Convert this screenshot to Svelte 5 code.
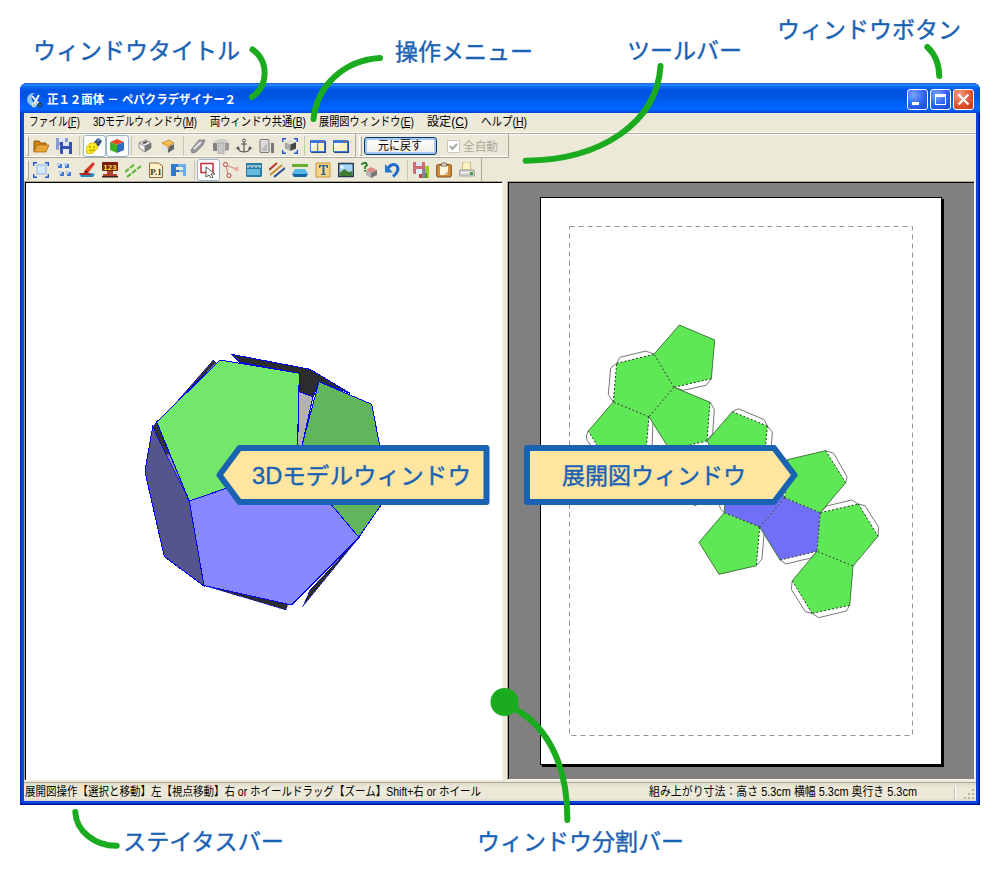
<script>
  const menus = [
    { t: 'ファイル(F)', w: 51 },
    { t: '3Dモデルウィンドウ(M)', w: 104 },
    { t: '両ウィンドウ共通(B)', w: 96 },
    { t: '展開図ウィンドウ(E)', w: 95 },
    { t: '設定(C)', w: 41 },
    { t: 'ヘルプ(H)', w: 46 }
  ];

  const cube = (top, left, right) =>
    `<path d="M8 1 15 4 8 7 1 4Z" fill="${top}"/><path d="M1 4 8 7V15L1 12Z" fill="${left}"/><path d="M15 4 8 7V15L15 12Z" fill="${right}"/>`;
  const floppy = (c, x = 0, y = 0) =>
    `<path d="M${x} ${y}h12v12h-11l-1-1z" fill="${c}"/><path d="M${x + 3} ${y}h6v4h-6z" fill="#dde4f4"/><path d="M${x + 3} ${y + 7}h6v5h-6z" fill="#e8ecf6"/>`;
  const corners = '<path d="M.7 4V.7H4M12 .7H15.3V4M15.3 12V15.3H12M4 15.3H.7V12" fill="none" stroke="#2456d8" stroke-width="1.4"/>';
  const win = '<path d="M1 3h15v12h-15z" fill="#274a94"/><path d="M0 2h15v12h-15z" fill="#3a78d8"/><path d="M1 5h13v8h-13z" fill="#fff0c4"/><path d="M1 5h7L1 10z" fill="#fffbee"/><path d="M11 3h2v1h-2z" fill="#e05038"/>';

  const icons = {
    open: '<path d="M1 14V3h5l2 2h5v3" fill="#c98016" stroke="#9a5c0c"/><path d="M1 14 4 7h12l-3 7z" fill="#eaa634" stroke="#ad6b12" stroke-width=".8"/>',
    save: floppy('#8b9dd0') + floppy('#3550ae', 4, 4),
    light: '<path d="M8 4 12 0l4 3-3 5-4 1z" fill="#2f4678"/><path d="M12 0l3 1-4 4z" fill="#6f8bc4"/><path d="M0 10 4 5h6l2 5-5 5-6 1z" fill="#ffec1c" stroke="#c4a500" stroke-width=".7"/><circle cx="4" cy="9" r=".8" fill="#7e6b00"/><circle cx="8" cy="9" r=".8" fill="#7e6b00"/><path d="M3 12q3 2 6-1" fill="none" stroke="#a88c00"/>',
    cube: cube('#e6492a', '#3fae38', '#276cc5'),
    box1: '<path d="M2 5 9 2l5 3-6 3zM2 5v5l6 4V8M14 5v5l-6 4" fill="#eee" stroke="#777" stroke-width=".8"/><path d="M8 8l6-3v5l-6 4z" fill="#777"/><path d="M5 5l4-2 2 1-4 2z" fill="#444"/>',
    box2: '<path d="M2 5 9 2l5 3-6 3z" fill="#f6c159" stroke="#b27b1c" stroke-width=".7"/><path d="M2 6l6 3v6l-6-4z" fill="#e4e4e4"/><path d="M8 9l6-3v5l-6 4z" fill="#666"/><path d="M2 5l6 3v3" fill="none" stroke="#e8a632" stroke-width="1.4"/>',
    clip: '<path d="M1 12 9 2h6l-2 5-7 7-4 1z" fill="#999" stroke="#777" stroke-width=".8"/><path d="M4 11l7-7" stroke="#e4e4e4" stroke-width="2"/>',
    cyl: '<path d="M0 4l5-3h7l4 3-4 2z" fill="#ccc"/><path d="M0 5h4v8H1l-1-1z" fill="#808080"/><path d="M5 5h6v11H5z" fill="#c6c6c6" stroke="#999" stroke-width=".6"/><path d="M12 5h4v7l-4 1z" fill="#999"/>',
    anchor: '<circle cx="8" cy="2.5" r="1.5" fill="none" stroke="#555"/><path d="M8 4v10M5 6h6M2 9v2q2 3 6 3t6-3V9M.5 11l1.500-2 1.500 2M15.500 11l-1.500-2-1.500 2" fill="none" stroke="#555" stroke-width="1.2"/>',
    panel: '<rect x="1" y="1.500" width="9" height="13" rx="1" fill="#ddd" stroke="#777"/><path d="M3 11l5-6v8H3z" fill="#bbb"/><path d="M12 5h3v10h-3z" fill="#777"/>',
    fit3d: corners + '<g transform="translate(2 1) scale(.8)">' + cube('#ddd', '#aaa', '#444') + '</g>',
    win2: win + '<path d="M7 5h1.200v8H7z" fill="#6a7ca0"/>',
    win1: win,
    frame: corners + '<path d="M4 3h9v9H4z" fill="#d7e8fb" stroke="#8db6e8"/>',
    grid: '<path d="M2 2h4v4H2zM9 2h4v4H9zM4 10h4v4H4zM11 10h4v4h-4z" fill="#3f78d6"/><path d="M1 1h3v3H1zM8 1h3v3H8zM3 9h3v3H3zM10 9h3v3h-3z" fill="#b4cdf6"/>',
    brush: '<path d="M0 11h12l4 1-2 3H2z" fill="#2887ba"/><path d="M1 11h9l2 2H2z" fill="#bd2618"/><path d="M14 0l2 2-7 9-4 1 0-3z" fill="#d93a28"/><path d="M7 8 5 12l4-2z" fill="#5a1c10"/>',
    num: '<rect x="0" y="0" width="16" height="9" rx="1" fill="#7b1d0c"/><text x="8" y="7.500" font-size="8" font-weight="700" text-anchor="middle" font-family="Liberation Sans, sans-serif" fill="#ffe044">123</text><path d="M5 9h6v3h4v3H1v-3h4z" fill="#b0442c"/><path d="M0 14h16v1.500H0z" fill="#402018"/>',
    lines: '<path d="M0 10 10 2M2 15 16 4" stroke="#52b82c" stroke-width="2" stroke-dasharray="5 1.500"/>',
    page: '<path d="M1.500 1h9l4 3v11.500h-13z" fill="#fff1ca" stroke="#8a6b35"/><text x="8" y="12.500" font-size="9" font-weight="700" text-anchor="middle" font-family="Liberation Serif, serif" fill="#463012">P.1</text>',
    flip: '<path d="M0 2h7v3H5v3h3v2H5v4H0z" fill="#2f78ca"/><path d="M7 2h8v12h-3v-4H8V8h4V5H7z" fill="#6cacea"/>',
    select: '<path d="M1 1.500h12v9h-12z" fill="#fff" stroke="#c42b37" stroke-width="1.5"/><path d="M6 5v10l3-2 2 3 2-1-2-3h4z" fill="#fff" stroke="#444" stroke-width=".9"/>',
    joint: '<path d="M3 3l2 10M3 3l10 4" stroke="#d88a84" stroke-width="1.2"/><circle cx="2.500" cy="2.500" r="2" fill="#fff" stroke="#bd3329"/><circle cx="6" cy="13.500" r="2" fill="#fff" stroke="#bd3329"/><circle cx="13.500" cy="7" r="2.2" fill="#eba7a0"/>',
    ruler: '<path d="M0 1h16v13l-1 1H1l-1-1z" fill="#2b7ba3"/><path d="M1 7h13v6H1z" fill="#64b8da"/><path d="M2 3v3M4 3v2M6 3v3M8 3v2M10 3v3M12 3v2M14 3v3" stroke="#f5ffff"/>',
    color: '<path d="M0 8 8 1" stroke="#b8301e" stroke-width="1.8"/><path d="M1 13 13 3" stroke="#c98a30" stroke-width="1.8"/><path d="M5 15l11-9" stroke="#294891" stroke-width="1.8"/>',
    flat: '<path d="M0 2h16v3H0z" fill="#69ae2b"/><path d="M3 7h10l3 5H0z" fill="#53b7e8"/><path d="M0 12h16l-2 3H2z" fill="#1565a4"/>',
    text: '<path d="M1 1h14v14H1z" fill="#f5d58b" stroke="#c99634"/><path d="M4 3h9v3h-1l-1-2H9.500v8h1.500v1H6v-1h1.500V4H6L5 6H4z" fill="#286290"/>',
    image: '<path d="M.7 1.500h14.600v13H.7z" fill="#a6d6f6" stroke="#273953" stroke-width="1.4"/><path d="M1.500 14v-3l5-4 4 3 4-1v5z" fill="#407b32"/><circle cx="4" cy="5" r="1.500" fill="#fff"/>',
    help: '<path d="M5 8 10 5l6 3-6 3z" fill="#df8c87"/><path d="M5 8l5 3v5l-5-3z" fill="#b4b4b4"/><path d="M10 11l6-3v5l-6 3z" fill="#777"/><path d="M1 3V2l2-1h2l1 2-2 2v2" fill="none" stroke="#268327" stroke-width="1.800"/><path d="M3 8h2v1.500H3z" fill="#268327"/>',
    undo: '<path d="M4 6Q9 0 13 4Q16 9 9 14.500" fill="none" stroke="#1f6cc8" stroke-width="3"/><path d="M1 2V10.500H9Z" fill="#2379d4"/>',
    export: floppy('#cf6b72', 0, 0) + '<path d="M9 7h3v9H9z" fill="#888"/><path d="M12 4h4v12h-4z" fill="#9aca2b"/><path d="M12 11h2v5h-2z" fill="#518f25"/><path d="M6 12h3v4H6z" fill="#b84a50"/>',
    paste: '<rect x=".7" y="2.500" width="14.600" height="12.500" rx="1.500" fill="#d08c3a" stroke="#80501c"/><path d="M4 4h8v9H4z" fill="#fff4de"/><path d="M5 4l1-3h4l1 3z" fill="#ddd" stroke="#70502c" stroke-width=".8"/><path d="M12 9v4H8z" fill="#d7b486"/>',
    print: '<path d="M4 0h7l1 8H3z" fill="#fff4c5" stroke="#b7a468" stroke-width=".7"/><path d="M1 8h14l1 6H0z" fill="#d4d4d4" stroke="#888" stroke-width=".7"/><path d="M2 10.500h8" stroke="#fff"/><path d="M11 10h3v3h-3z" fill="#44a533"/>'
  };

  const row1 = ['open', 'save', '|7', '*light', '*cube', '|5', 'box1', 'box2', '|7', 'clip', 'cyl', 'anchor', 'panel', 'fit3d', '|5', 'win2', 'win1'];
  const row2 = ['frame', 'grid', 'brush', 'num', 'lines', 'page', 'flip', '|6', '*select', 'joint', 'ruler', 'color', 'flat', 'text', 'image', 'help', 'undo', '|6', 'export', 'paste', 'print'];

  const G = '#5fe855';
  const B = '#706ff6';
  // e: one letter per edge — s solid cut, d dashed fold, n already drawn by a neighbour
  const faces = [
    { c: G, p: [[679.3, 325], [714.7, 340], [711.3, 378.7], [674, 387.3], [654, 354.3]], e: 'ssdds' },
    { c: G, p: [[654, 354.3], [674, 387.3], [649, 416.7], [613.3, 402], [616.7, 363.3]], e: 'ndddd' },
    { c: G, p: [[649, 416.7], [645.5, 455.5], [608, 463], [588.3, 431], [613.3, 402]], e: 'dddsn' },
    { c: G, p: [[674, 387.3], [710, 402.3], [707, 441], [669.5, 449.5], [649, 416.7]], e: 'sddsn' },
    { c: G, p: [[732.3, 411.7], [767.3, 426], [764, 465], [726, 473], [707, 441]], e: 'dddss' },
    { c: B, p: [[724.3, 512.7], [759.7, 527], [784.7, 497.7], [765, 465], [727, 474]], e: 'ddsss' },
    { c: B, p: [[784.7, 497.7], [820.3, 512.7], [817, 551.3], [780, 560], [759.7, 527]], e: 'dddsn' },
    { c: G, p: [[784.7, 497.7], [787.3, 459.7], [825.7, 450.7], [845.7, 482.7], [820.3, 512.7]], e: 'dsdsn' },
    { c: G, p: [[820.3, 512.7], [858.3, 504], [878, 536.3], [853, 566], [817, 551.3]], e: 'ddsdn' },
    { c: G, p: [[817, 551.3], [853, 566], [849.7, 605.3], [812, 613.3], [792.3, 580.7]], e: 'nsdds' },
    { c: G, p: [[724.3, 512.7], [759.7, 527], [756.3, 565.7], [719, 574.3], [699, 542.3]], e: 'ndsss' }
  ];
  const flaps = [
    '711.3,379 706,385.3 683.3,390.3 674,387.3',
    '616.7,363.3 620,357.3 646,351 654,354.3',
    '616.7,363.3 610.7,368 608.3,394.7 613.3,402',
    '588.3,431 586.3,436 587.3,440.7 594,450',
    '649,416.7 653,421.7 652,447',
    '710,402.3 714.3,409.3 712.7,433.3 707,441',
    '732.3,411.7 738.3,408.7 764.3,419.7 767.3,426',
    '767.3,426 772.3,432 771.3,448',
    '825.7,450.7 833.7,453.3 847,476.7 845.7,482.7',
    '820.3,512.7 826.7,506 851.7,500 858.3,504',
    '858.3,504 865,505.7 878.7,527.3 878,536.3',
    '780,560 786,564 810.7,558 817,551.3',
    '812,613.3 818.7,617.7 846.3,611 849.7,605.3',
    '792.3,580.7 791.3,589.3 805.3,611.7 812,613.3',
    '759.7,527 764,533.3 762,559 756.3,565.7',
    '719,503 720.5,509 724.3,512.7',
    '691,503 695,506 699,503'
  ];

  const labels = [
    ['ウィンドウタイトル', 33, 59, 207],
    ['操作メニュー', 395, 60, 138],
    ['ツールバー', 627, 59, 115],
    ['ウィンドウボタン', 777, 38, 184],
    ['ステイタスバー', 123, 850, 161],
    ['ウィンドウ分割バー', 477, 850, 207],
    ['3Dモデルウィンドウ', 252, 484, 219],
    ['展開図ウィンドウ', 562, 484, 184]
  ];
</script>

{#snippet fit(text, w, key)}
  <svg class="fit" width={w} height="18">
    <text x="0" y="13" textLength={w} lengthAdjust="spacingAndGlyphs">{text}</text>
    {#if key}<path d="M{w - 12} 14.500h8" stroke="currentColor" />{/if}
  </svg>
{/snippet}

{#snippet tools(list)}
  {#each list as id}
    {#if id[0] === '|'}
      <span class="sep" style="width:{id.slice(1)}px"></span>
    {:else}
      <button class="tool" class:on={id[0] === '*'} aria-label={id.replace('*', '')}>
        <svg viewBox="0 0 16 16" width="16" height="16">{@html icons[id.replace('*', '')]}</svg>
      </button>
    {/if}
  {/each}
{/snippet}

<div class="page">
  <div class="window">
    <header class="title">
      <svg class="logo" viewBox="0 0 16 16" width="16" height="16">
        <circle cx="6.500" cy="7.500" r="6.500" fill="#8fc8f5" />
        <circle cx="9.500" cy="6" r="5" fill="#0a5ce6" />
        <path d="M5 4l7 8M12 3 7 12" stroke="#fff" stroke-width="1.8" />
        <circle cx="7" cy="13" r="1.800" fill="none" stroke="#dfe6c8" stroke-width="1.2" />
        <circle cx="13" cy="13" r="1.800" fill="none" stroke="#403a2c" stroke-width="1.2" />
      </svg>
      {@render fit('正１２面体 － ペパクラデザイナー２', 189)}
      <div class="controls">
        <button aria-label="minimize"><svg width="21" height="21"><path d="M5 13h7v3H5z" fill="#fff" /></svg></button>
        <button aria-label="maximize"><svg width="21" height="21"><path d="M5 5h11v11H5zM6 8v7h9V8z" fill="#fff" fill-rule="evenodd" /></svg></button>
        <button class="close" aria-label="close"><svg width="21" height="21"><path d="M5.500 5.500l10 10M15.500 5.500l-10 10" stroke="#fff" stroke-width="2.2" /></svg></button>
      </div>
    </header>
    <div class="client">
      <nav class="menu">
        {#each menus as m}{@render fit(m.t, m.w, true)}{/each}
      </nav>
      <div class="bars">
        <div class="band">
          <div class="bar first"><i class="grip"></i>{@render tools(row1)}</div>
          <div class="bar second">
            <i class="grip"></i>
            <button class="reset">{@render fit('元に戻す', 44)}</button>
            <label class="auto">
              <svg width="13" height="13"><path d="M.5.5h12v12H.5z" fill="#fff" stroke="#cac8bb" /><path d="M3 6l2.500 3L10 4" fill="none" stroke="#aca899" stroke-width="2" /></svg>
              {@render fit('全自動', 35)}
            </label>
          </div>
        </div>
        <div class="band">
          <div class="bar third"><i class="grip"></i>{@render tools(row2)}</div>
        </div>
      </div>
      <main class="panes">
        <section class="model">
          <svg width="476" height="597" viewBox="26 183 476 597" shape-rendering="crispEdges" stroke="#0000f0" stroke-width="1">
            <path d="M213.3 360 216 362.7 178.3 400Z" fill="#333" stroke-width=".5" />
            <path d="M231.3 354.3 310 369.3 350 393.3 319 381.7 313 397 299.3 392V373.3L240 362.3Z" fill="#2c2c2c" />
            <path d="M299 391.7 313 396.7 302 446H297.7Z" fill="#b2b2b2" />
            <path d="M319 381.7 371.7 404.3 380 447 389 493.5 358.7 537.3 297 464Z" fill="#61b65c" />
            <path d="M152.7 426.7 145.7 466.7V475L164.3 556.7 204 586 189.3 501Z" fill="#56548d" />
            <path d="M152.7 426.7 156.7 422 169.3 454H166Z" fill="#333" stroke-width=".5" />
            <path d="M166 454H169.3L189.3 501Z" fill="#92929c" stroke-width=".5" />
            <path d="M204 585.5 291.7 605 288 604 286 610Z" fill="#2c2c2c" stroke-width=".5" />
            <path d="M358.7 538 310 590 302.7 606.7Z" fill="#2c2c2c" stroke-width=".5" />
            <path d="M189.3 501 297 464 359 537.5 291.7 605 204 585.5Z" fill="#8988ff" />
            <path d="M220 360 299.3 373.3 297 464 189.3 501 156.7 422Z" fill="#73e66c" />
          </svg>
        </section>
        <div class="splitter"></div>
        <section class="net">
          <div class="paper">
            <svg width="400" height="566" viewBox="541 198 400 566" fill="none">
              <rect x="569.5" y="226.5" width="343" height="509" stroke="#959595" stroke-dasharray="5 4" />
              {#each flaps as f}<polyline points={f} stroke="#777" fill="#fff" />{/each}
              {#each faces as f}<polygon points={f.p.join(' ')} fill={f.c} />{/each}
              {#each faces as f}
                {#each f.p as a, i}
                  {#if f.e[i] !== 'n'}
                    <path
                      d="M{a}L{f.p[(i + 1) % 5]}"
                      stroke={f.e[i] === 's' ? '#3e7a3a' : '#1d3a20'}
                      stroke-dasharray={f.e[i] === 'd' ? '2 2' : null}
                    />
                  {/if}
                {/each}
              {/each}
            </svg>
          </div>
        </section>
      </main>
      <footer class="status">
        {@render fit('展開図操作【選択と移動】左【視点移動】右 or ホイールドラッグ【ズーム】Shift+右 or ホイール', 456)}
        <span class="size">{@render fit('組み上がり寸法：高さ 5.3cm 横幅 5.3cm 奥行き 5.3cm', 268)}</span>
        <svg class="resize" width="22" height="18">
          <path d="M.5 3v13" stroke="#c5c2b2" /><path d="M1.500 3v13" stroke="#fff" />
          <g fill="#b8b4a2"><path d="M18 6h2v2h-2zM14 10h2v2h-2zM18 10h2v2h-2zM10 14h2v2h-2zM14 14h2v2h-2zM18 14h2v2h-2z" /></g>
        </svg>
      </footer>
    </div>
  </div>

  <svg class="notes" width="1004" height="880">
    <g fill="#ffe6a0" stroke="#1a62b2" stroke-width="6" stroke-linejoin="round">
      <path d="M219.5 475 239.5 448H486.5V502H239.5Z" />
      <path d="M527 448H774L794.5 475 774 502H527Z" />
    </g>
    <g fill="none" stroke="#1aab1e" stroke-width="6" stroke-linecap="round">
      <path d="M252.5 49.5A29 29 0 0 1 252 97" />
      <path d="M380 58C345 60 317 85 313.5 119" />
      <path d="M660.5 66C657 122 602 160 525.7 160.7" />
      <path d="M927.3 47C935 54 939 65 939.3 76" />
      <path d="M75.3 812C76 831 95 846 116.7 845.7" />
      <path d="M515 709C550 728 568 770 567.3 820" />
      <circle cx="504.5" cy="702" r="14" fill="#1aab1e" stroke="none" />
    </g>
    {#each labels as [t, x, y, w]}
      <text {x} {y} textLength={w} lengthAdjust="spacingAndGlyphs">{t}</text>
    {/each}
  </svg>
</div>

<style>
  :global(body) { background: #fff; }
  .page {
    position: relative;
    box-sizing: border-box;
    width: 1004px;
    height: 880px;
    padding: 83px 24px 0 20px;
    overflow: hidden;
    font: 12px 'Liberation Sans', 'Noto Sans CJK JP', sans-serif;
  }
  button { padding: 0; margin: 0; border: 0; background: none; }
  svg { display: block; flex: none; }
  .fit { overflow: visible; }
  .fit text { font: 12px 'Liberation Sans', 'Noto Sans CJK JP', sans-serif; fill: currentColor; white-space: pre; }
  .window {
    box-sizing: border-box;
    width: 960px;
    height: 722px;
    padding: 0 4px 4px;
    border-radius: 7px 7px 0 0;
    background: #0a45e0;
    box-shadow: inset 1px 0 #0026b8, inset -1px -1px #001590, inset -2px -2px #0030c8;
    display: flex;
    flex-direction: column;
  }
  .title {
    box-sizing: border-box;
    height: 30px;
    flex: none;
    margin: 0 -4px;
    padding: 0 6px 1px 7px;
    display: flex;
    align-items: center;
    border-radius: 7px 7px 0 0;
    background: linear-gradient(#0958d8 0, #2f8bff 6%, #0868f4 13%, #0054e3 25%, #0054e3 45%, #0062fa 75%, #0066ff 88%, #0045d0 100%);
    color: #fff;
  }
  .title .logo { margin: 4px 4px 0 0; }
  .title .fit { margin-top: 5px; }
  .title .fit text { font-weight: 700; }
  .controls { display: flex; gap: 2px; margin: 4px 0 0 auto; }
  .controls button {
    box-sizing: border-box;
    width: 21px;
    height: 21px;
    border: 1px solid #fff;
    border-radius: 3px;
    background: radial-gradient(circle at 30% 25%, #7ea4f8, #2c62ee 55%, #1848cc);
    overflow: hidden;
  }
  .controls svg { margin: -1px; }
  .controls .close { background: radial-gradient(circle at 30% 25%, #f0a088, #e2532c 55%, #c03410); }
  .client { flex: 1; min-height: 0; display: flex; flex-direction: column; background: #ece9d8; }
  .menu {
    box-sizing: border-box;
    height: 20px;
    flex: none;
    padding: 0 0 0 5px;
    display: flex;
    gap: 13px;
    border-bottom: 1px solid #fff;
    color: #000;
  }
  .bars { height: 47px; flex: none; border-top: 1px solid #aca899; box-shadow: inset 0 1px #fff; }
  .band { display: flex; height: 24px; }
  .band + .band { height: 23px; }
  .bar {
    box-sizing: border-box;
    height: 24px;
    padding-top: 1px;
    display: flex;
    align-items: center;
    border-right: 1px solid #aca899;
    border-bottom: 1px solid #aca899;
    box-shadow: inset 0 -1px #fff;
  }
  .third { height: 23px; border-bottom: 0; box-shadow: none; }
  .first { width: 332px; }
  .second { width: 153px; }
  .third { width: 458px; }
  .grip {
    box-sizing: border-box;
    width: 3px;
    height: 20px;
    margin: 0 1px 0 2px;
    border: 1px solid #fff;
    border-right-color: #aca899;
    border-bottom-color: #aca899;
    flex: none;
  }
  .tool { box-sizing: border-box; width: 23px; height: 22px; padding: 3px; flex: none; border: 0; }
  .tool.on { padding: 2px; border: 1px solid #98b5cf; border-radius: 3px; background: #fdfdfb; }
  .sep { height: 20px; flex: none; background: linear-gradient(#c9c6b6, #c9c6b6) center / 1px 100% no-repeat; }
  .second .grip { margin: 0 2px 0 3px; }
  .reset {
    box-sizing: border-box;
    width: 73px;
    height: 18px;
    padding-left: 13px;
    border: 1px solid #003c74;
    border-radius: 3px;
    background: linear-gradient(#fff, #efede4);
    box-shadow: inset 0 0 0 2px #a9c5f3;
    color: #000;
  }
  .reset .fit { margin-top: -1px; }
  .auto { display: flex; align-items: center; gap: 3px; margin-left: 10px; color: #aca899; }
  .auto .fit { margin-top: 1px; }
  .panes {
    box-sizing: border-box;
    height: 601px;
    flex: none;
    padding: 0 1px 0 0;
    display: flex;
    border-bottom: 2px solid #ece9d8;
  }
  .model, .net {
    box-sizing: border-box;
    height: 599px;
    border: 1px solid #f5f3ea;
    border-top: 1px solid #aca899;
  }
  .model { width: 479px; border-left: 1px solid #aca899; }
  .model svg { border-top: 1px solid #000; border-left: 1px solid #000; background: #fff; }
  .splitter { width: 4px; }
  .net { width: 468px; border-left: 1px solid #aca899; background: #808080; box-shadow: inset 1px 1px #000; padding: 15px 0 0 32px; }
  .paper { width: 400px; height: 566px; border: 1px solid #000; background: #fff; box-shadow: 2px 2px #000; }
  .status {
    box-sizing: border-box;
    min-height: 0;
    flex: 1;
    padding-left: 1px;
    display: flex;
    align-items: center;
    border-top: 1px solid #aca899;
    background: linear-gradient(#dedbcb, #ece9d8 25%, #ece9d8 80%, #dbd8c8);
    color: #000;
  }
  .size { margin-left: 168px; }
  .resize { margin-left: 37px; }
  .notes { position: absolute; left: 0; top: 0; pointer-events: none; }
  .notes text { font: 23px 'Liberation Sans', 'Noto Sans CJK JP', sans-serif; fill: #1a62b4; stroke: #1a62b4; stroke-width: 0.4; }
</style>
